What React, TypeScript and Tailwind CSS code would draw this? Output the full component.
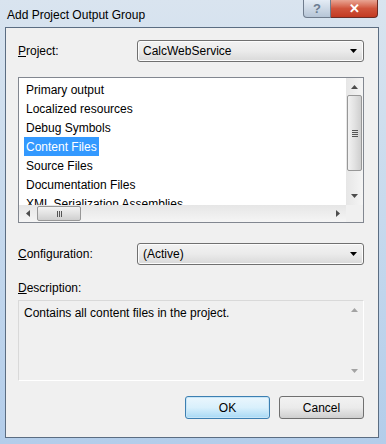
import React from "react";

const font = { fontFamily: '"Liberation Sans", Arial, sans-serif' };

function DownTri({ color = "#000" }: { color?: string }) {
  return (
    <svg width="7" height="4" viewBox="0 0 7 4">
      <path d="M0 0 L7 0 L3.5 4 Z" fill={color} />
    </svg>
  );
}
function UpTri({ color = "#000" }: { color?: string }) {
  return (
    <svg width="7" height="4" viewBox="0 0 7 4">
      <path d="M0 4 L7 4 L3.5 0 Z" fill={color} />
    </svg>
  );
}
function LeftTri({ color = "#000" }: { color?: string }) {
  return (
    <svg width="4" height="7" viewBox="0 0 4 7">
      <path d="M4 0 L4 7 L0 3.5 Z" fill={color} />
    </svg>
  );
}
function RightTri({ color = "#000" }: { color?: string }) {
  return (
    <svg width="4" height="7" viewBox="0 0 4 7">
      <path d="M0 0 L0 7 L4 3.5 Z" fill={color} />
    </svg>
  );
}

function Combo({ text }: { text: string }) {
  return (
    <div className="w-[227px] h-[22px] rounded-[3px] border border-[#707070] bg-gradient-to-b from-[#f2f2f2] via-[#ebebeb] to-[#d9d9d9] flex items-center pl-[5px] pr-[6px] shadow-[inset_0_0_0_1px_#fcfcfc]">
      <span className="flex-1 text-[12px] text-black">{text}</span>
      <DownTri />
    </div>
  );
}

const items = [
  "Primary output",
  "Localized resources",
  "Debug Symbols",
  "Content Files",
  "Source Files",
  "Documentation Files",
  "XML Serialization Assemblies",
];

export default function App() {
  return (
    <div
      className="w-[386px] h-[444px] overflow-hidden flex flex-col bg-gradient-to-b from-[#d9e4ef] via-[#c6d9ed] to-[#b3cdea]"
      style={font}
    >
      {/* title bar */}
      <div className="h-[27px] flex shrink-0">
        <div className="flex-1 pl-[7px] pt-[6px] text-[12px] text-black">Add Project Output Group</div>
        <div className="flex h-[18px] mr-[8px]">
          <div className="w-[28px] h-[18px] rounded-bl-[4px] border border-[#6f7c8d] border-t-0 bg-gradient-to-b from-[#e4ecf5] to-[#b6c5d6] flex items-center justify-center text-[13px] font-bold text-[#6b7c90] leading-none">
            ?
          </div>
          <div className="w-[47px] h-[18px] rounded-br-[4px] border border-[#6b2b24] border-t-0 border-l-0 bg-gradient-to-b from-[#e8a493] via-[#d0543c] to-[#c23a22] flex items-center justify-center text-[13px] font-bold text-white leading-none">
            ✕
          </div>
        </div>
      </div>

      {/* client */}
      <div className="ml-[5px] w-[374px] h-[411px] border border-[#5b6d82] bg-[#f0f0f0] flex flex-col pl-[12px] pr-[13px] text-[12px] text-black">
        {/* project row */}
        <div className="flex items-center mt-[12px] h-[22px]">
          <span className="w-[119px]">
            <span className="underline">P</span>roject:
          </span>
          <Combo text="CalcWebService" />
        </div>

        {/* list */}
        <div className="mt-[15px] h-[146px] w-[346px] border border-[#828790] bg-white flex flex-col">
          <div className="flex flex-1 min-h-0">
            <div className="flex-1 flex flex-col pt-[2px] pl-[5px] overflow-hidden">
              {items.map((it) => (
                <div key={it} className="h-[19px] flex items-center shrink-0">
                  <span
                    className={
                      it === "Content Files"
                        ? "bg-[#3399ff] text-white px-[2px] h-[19px] flex items-center"
                        : "px-[2px]"
                    }
                  >
                    {it}
                  </span>
                </div>
              ))}
            </div>
            {/* vscroll */}
            <div className="w-[17px] bg-gradient-to-r from-[#e6e6e6] to-[#f5f5f5] flex flex-col items-center">
              <div className="h-[17px] flex items-center justify-center">
                <UpTri color="#4d4d4d" />
              </div>
              <div className="w-[15px] h-[76px] rounded-[2px] border border-[#979797] bg-gradient-to-r from-[#f2f2f2] via-[#e2e2e2] to-[#cfcfcf] flex items-center justify-center">
                <div className="flex flex-col gap-[1px]">
                  <div className="w-[6px] h-[1px] bg-[#555]" />
                  <div className="w-[6px] h-[1px] bg-[#555]" />
                  <div className="w-[6px] h-[1px] bg-[#555]" />
                  <div className="w-[6px] h-[1px] bg-[#555]" />
                </div>
              </div>
              <div className="flex-1 flex items-end justify-center pb-[7px]">
                <DownTri color="#4d4d4d" />
              </div>
            </div>
          </div>
          {/* hscroll */}
          <div className="h-[17px] flex shrink-0">
            <div className="flex-1 bg-gradient-to-b from-[#e6e6e6] to-[#f5f5f5] flex items-center">
              <div className="w-[18px] flex justify-center">
                <LeftTri color="#4d4d4d" />
              </div>
              <div className="w-[44px] h-[15px] rounded-[2px] border border-[#979797] bg-gradient-to-b from-[#f2f2f2] via-[#e2e2e2] to-[#cfcfcf] flex items-center justify-center gap-[1px]">
                <div className="w-[1px] h-[6px] bg-[#555]" />
                <div className="w-[1px] h-[6px] bg-[#555]" />
                <div className="w-[1px] h-[6px] bg-[#555]" />
              </div>
              <div className="flex-1" />
              <div className="w-[17px] flex justify-center">
                <RightTri color="#4d4d4d" />
              </div>
            </div>
            <div className="w-[17px] bg-[#f0f0f0]" />
          </div>
        </div>

        {/* config row */}
        <div className="flex items-center mt-[20px] h-[22px]">
          <span className="w-[119px]">
            <span className="underline">C</span>onfiguration:
          </span>
          <Combo text="(Active)" />
        </div>

        {/* description label */}
        <div className="mt-[15px] h-[16px] leading-[16px]">
          <span className="underline">D</span>escription:
        </div>

        {/* description box */}
        <div className="mt-[4px] h-[81px] w-[346px] border border-[#d9d9d9] border-r-white border-b-white flex">
          <div className="flex-1 pl-[5px] pt-[3px]">Contains all content files in the project.</div>
          <div className="w-[17px] flex flex-col items-center justify-between py-[7px]">
            <UpTri color="#a3a3a3" />
            <DownTri color="#a3a3a3" />
          </div>
        </div>

        {/* buttons */}
        <div className="flex justify-end gap-[9px] mt-[15px] pr-[1px]">
          <div className="w-[85px] h-[23px] rounded-[3px] border border-[#3c7fb1] bg-gradient-to-b from-[#eaf6fd] via-[#d9f0fc] to-[#a7d9f5] flex items-center justify-center shadow-[inset_0_0_0_1px_#c7e5f7]">
            OK
          </div>
          <div className="w-[85px] h-[23px] rounded-[3px] border border-[#707070] bg-gradient-to-b from-[#f2f2f2] via-[#ebebeb] to-[#cfcfcf] flex items-center justify-center">
            Cancel
          </div>
        </div>
      </div>
    </div>
  );
}
